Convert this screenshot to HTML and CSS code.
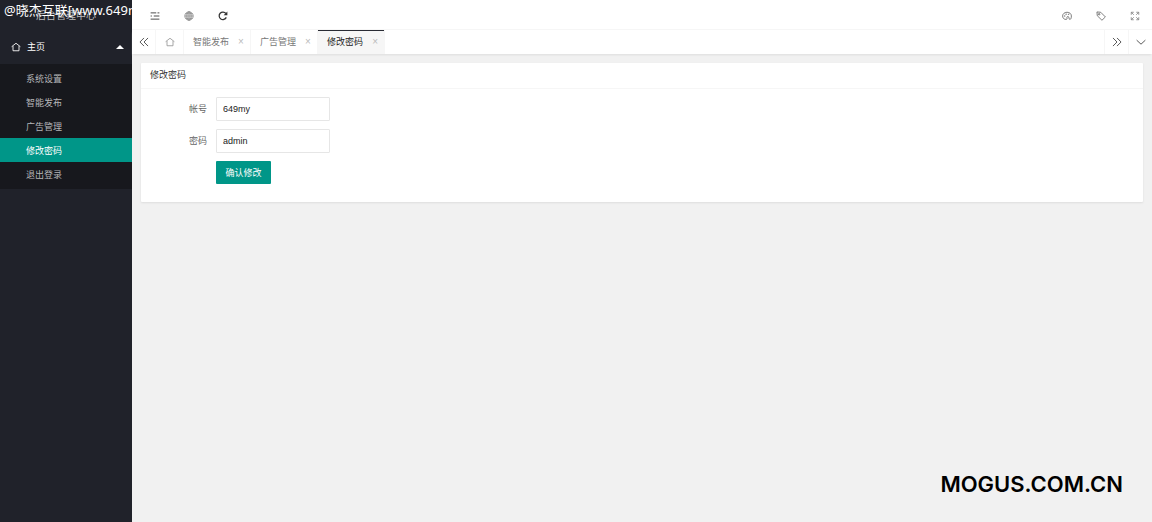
FILE: index.html
```html
<!DOCTYPE html>
<html lang="zh-CN">
<head>
<meta charset="utf-8">
<title>后台管理中心</title>
<link rel="stylesheet" href="styles.css">
</head>
<body>
<div class="app">
  <aside class="side">
    <div class="brand">后台管理中心<span class="brand-mark">@晓杰互联[www.649my</span></div>
    <nav>
      <button class="group" type="button" aria-expanded="true">
        <svg class="icon" viewBox="0 0 16 16"><path d="M1 7.500 8 2l7 5.500M3.200 6.500V14h9.600V6.500"/></svg>
        <span>主页</span>
        <i class="caret"></i>
      </button>
      <ul class="menu">
        <li><a href="#">系统设置</a></li>
        <li><a href="#">智能发布</a></li>
        <li><a href="#">广告管理</a></li>
        <li><a class="current" href="#">修改密码</a></li>
        <li><a href="#">退出登录</a></li>
      </ul>
    </nav>
  </aside>
  <div class="main">
    <header class="bar">
      <button class="tool" type="button" aria-label="侧边伸缩"><svg class="icon" viewBox="0 0 16 16"><path d="M1 3h9M12 3h3M6 8h9M1 8h2M1 13h14"/></svg></button>
      <button class="tool" type="button" aria-label="前台"><svg class="icon thin" viewBox="0 0 16 16"><circle cx="8" cy="8" r="6.700"/><path d="M8 1.300v13.400M1.300 8h13.400M2.500 4.500h11M2.500 11.500h11"/><ellipse cx="8" cy="8" rx="3.400" ry="6.700"/></svg></button>
      <button class="tool" type="button" aria-label="刷新"><svg class="icon bold" viewBox="0 0 16 16"><path d="M13.300 10.200A6 6 0 1 1 12.600 4"/><path class="solid" d="M15 .8v6H9z"/></svg></button>
      <span class="spacer"></span>
      <button class="tool" type="button" aria-label="主题"><svg class="icon fine" viewBox="0 0 16 16"><path d="M6.500 13.500C3 13.500 1 11 1 8c0-3.300 3-6 7-6s7 2.500 7 6c0 3.500-1 5.500-2.500 5.500-2 0-.5-4-2.500-4.500S7.500 10 8 11.500c.3 1-.3 2-1.500 2z"/><circle cx="4.500" cy="8" r=".5"/><circle cx="6.500" cy="5" r=".5"/><circle cx="10.500" cy="5.200" r=".5"/></svg></button>
      <button class="tool" type="button" aria-label="便签"><svg class="icon fine" viewBox="0 0 16 16"><path d="M1.500 1.500 2 7.500l7.500 7.300 5.500-5.300L7.500 2z"/><circle cx="5" cy="5.200" r="1.200"/></svg></button>
      <button class="tool" type="button" aria-label="全屏"><svg class="icon pale" viewBox="0 0 16 16"><path d="M2 6V2h4M2 2l4 4M10 2h4v4M14 2l-4 4M2 10v4h4M2 14l4-4M14 10v4h-4M14 14l-4-4"/></svg></button>
    </header>
    <div class="tabs">
      <button class="step" type="button" aria-label="向左"><svg class="icon" viewBox="0 0 16 16"><path d="M8 1.500 1.500 8 8 14.500M14.500 1.500 8 8l6.500 6.500"/></svg></button>
      <a class="home" href="#" aria-label="主页"><svg class="icon" viewBox="0 0 16 16"><path d="M1 7.500 8 2l7 5.500M3.200 6.500V14h9.600V6.500"/></svg></a>
      <div class="tab"><a href="#">智能发布</a><button class="close" type="button" aria-label="关闭">×</button></div>
      <div class="tab"><a href="#">广告管理</a><button class="close" type="button" aria-label="关闭">×</button></div>
      <div class="tab open"><a href="#">修改密码</a><button class="close" type="button" aria-label="关闭">×</button></div>
      <span class="spacer"></span>
      <button class="step right" type="button" aria-label="向右"><svg class="icon" viewBox="0 0 16 16"><path d="M8 1.500 14.500 8 8 14.500M1.500 1.500 8 8l-6.500 6.500"/></svg></button>
      <button class="step right" type="button" aria-label="更多"><svg class="icon" viewBox="0 0 16 16"><path d="m1 5 7 6.500L15 5"/></svg></button>
    </div>
    <main class="content">
      <section class="card">
        <h1 class="card-title">修改密码</h1>
        <form class="form">
          <label for="account">帐号</label>
          <input id="account" type="text" value="649my">
          <label for="password">密码</label>
          <input id="password" type="text" value="admin">
          <button class="submit" type="button">确认修改</button>
        </form>
      </section>
      <div class="site">MOGUS.COM.CN</div>
    </main>
  </div>
</div>
</body>
</html>
```
FILE: styles.css
```css
* { box-sizing: border-box; }
body {
  margin: 0;
  background: #f1f1f1;
  color: #666;
  font: 9px/12px "Liberation Sans", "Noto Sans CJK SC", sans-serif;
}
button, input { font: inherit; color: inherit; }
button { padding: 0; border: 0; background: none; }
a { color: inherit; text-decoration: none; }

.app { display: flex; min-height: 100vh; }
.icon {
  display: block;
  width: 10px;
  height: 10px;
  fill: none;
  stroke: currentColor;
  stroke-width: 1.4;
}
.icon.thin { color: #666; stroke-width: 1; }
.icon.fine { stroke-width: 1; }
.icon.bold { stroke-width: 2; }
.icon .solid { fill: currentColor; stroke: none; }
.icon.pale { color: #888; }
.spacer { flex: 1; }

.side { width: 132px; flex: none; background: #20222a; color: #fff; }
.brand {
  position: relative;
  height: 30px;
  overflow: hidden;
  color: #b9babd;
  font-size: 10px;
  line-height: 32px;
  text-align: center;
}
.brand-mark {
  position: absolute;
  top: 0;
  left: 4px;
  color: #fff;
  font: 13px/20px "Noto Sans", "Noto Sans CJK SC", sans-serif;
  white-space: nowrap;
}
.group {
  display: flex;
  align-items: center;
  gap: 6px;
  width: 100%;
  height: 34px;
  padding: 0 8px 0 11px;
}
.caret {
  margin-left: auto;
  border: 4px solid transparent;
  border-top: 0;
  border-bottom-color: #fff;
}
.menu {
  margin: 0;
  padding: 2px 0 3px;
  background: #17181d;
  color: #b5b6b8;
  list-style: none;
}
.menu a { display: block; padding: 2px 0 0 26px; line-height: 22px; }
.menu .current { background: #009688; color: #fff; }

.main { display: flex; flex: 1; flex-direction: column; min-width: 0; }
.bar {
  display: flex;
  align-items: center;
  height: 30px;
  padding: 2px 0 0 6px;
  background: #fff;
  border-bottom: 1px solid #f6f6f6;
  color: #333;
}
.tool { display: grid; place-items: center; width: 34px; height: 28px; }
.tabs {
  display: flex;
  height: 24px;
  background: #fff;
  box-shadow: 0 2px 2px -1px #ddd;
  color: #777;
}
.step, .home { display: grid; place-items: center; border-right: 1px solid #f6f6f6; }
.step { width: 24px; color: #444; }
.step.right { border-right: 0; border-left: 1px solid #f6f6f6; }
.home { width: 28px; color: #999; }
.tab {
  display: flex;
  align-items: center;
  gap: 8px;
  padding: 0 5px 0 9px;
  border-right: 1px solid #f6f6f6;
}
.tab.open { background: #f6f6f6; color: #222; box-shadow: inset 0 1px #292b34; }
.close { width: 8px; color: #bbb; font-size: 10px; }

.content { display: flex; flex: 1; flex-direction: column; padding: 9px; }
.card {
  min-height: 139px;
  background: #fff;
  border-radius: 1px;
  box-shadow: 0 1px 2px #ddd;
}
.card-title {
  margin: 0;
  padding: 0 9px;
  border-bottom: 1px solid #f6f6f6;
  color: #333;
  font-size: 9px;
  font-weight: 400;
  line-height: 25px;
}
.form {
  display: grid;
  grid-template-columns: 66px 114px;
  gap: 8px 9px;
  align-items: center;
  padding: 8px 0;
}
.form label { text-align: right; }
.form input {
  width: 100%;
  height: 24px;
  padding: 0 6px;
  border: 1px solid #e6e6e6;
  border-radius: 1px;
  background: #fff;
  color: #222;
}
.submit {
  grid-column: 2;
  width: 55px;
  height: 23px;
  border-radius: 1px;
  background: #009688;
  color: #fff;
}
.site {
  margin: auto 20px 16px auto;
  color: #000;
  font: 600 22px/26px Inter, sans-serif;
}
```
